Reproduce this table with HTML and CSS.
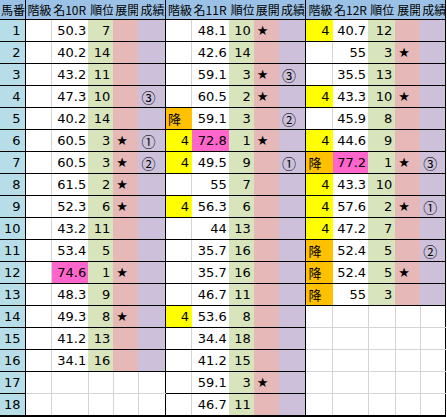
FILE: index.html
```html
<!DOCTYPE html>
<html lang="ja">
<head>
    <meta charset="UTF-8">
    <title>名R 一覧</title>
    <link rel="stylesheet" href="styles.css">
</head>
<body>
    <table class="sheet">
        <colgroup>
            <col class="c-no">
            <col class="c-k"><col class="c-m"><col class="c-r"><col class="c-t"><col class="c-s">
            <col class="c-k"><col class="c-m"><col class="c-r"><col class="c-t"><col class="c-s2">
            <col class="c-k"><col class="c-m3"><col class="c-r2"><col class="c-t"><col class="c-t">
        </colgroup>
        <tr class="head">
            <th class="h hn">馬番</th>
            <th class="h">階級</th><th class="h">名10R</th><th class="h">順位</th><th class="h">展開</th><th class="h he">成績</th>
            <th class="h">階級</th><th class="h">名11R</th><th class="h">順位</th><th class="h">展開</th><th class="h he">成績</th>
            <th class="h">階級</th><th class="h">名12R</th><th class="h">順位</th><th class="h">展開</th><th class="h he">成績</th>
        </tr>
        <tr>
            <th class="no">1</th>
            <td class="k"></td><td class="m">50.3</td><td class="r">7</td><td class="t"></td><td class="s"></td>
            <td class="k"></td><td class="m">48.1</td><td class="r">10</td><td class="t">★</td><td class="s"></td>
            <td class="k y">4</td><td class="m">40.7</td><td class="r">12</td><td class="t"></td><td class="s"></td>
        </tr>
        <tr>
            <th class="no">2</th>
            <td class="k"></td><td class="m">40.2</td><td class="r">14</td><td class="t"></td><td class="s"></td>
            <td class="k"></td><td class="m">42.6</td><td class="r">14</td><td class="t"></td><td class="s"></td>
            <td class="k"></td><td class="m">55</td><td class="r">3</td><td class="t">★</td><td class="s"></td>
        </tr>
        <tr>
            <th class="no">3</th>
            <td class="k"></td><td class="m">43.2</td><td class="r">11</td><td class="t"></td><td class="s"></td>
            <td class="k"></td><td class="m">59.1</td><td class="r">3</td><td class="t">★</td><td class="s">③</td>
            <td class="k"></td><td class="m">35.5</td><td class="r">13</td><td class="t"></td><td class="s"></td>
        </tr>
        <tr>
            <th class="no">4</th>
            <td class="k"></td><td class="m">47.3</td><td class="r">10</td><td class="t"></td><td class="s">③</td>
            <td class="k"></td><td class="m">60.5</td><td class="r">2</td><td class="t">★</td><td class="s"></td>
            <td class="k y">4</td><td class="m">43.3</td><td class="r">10</td><td class="t">★</td><td class="s"></td>
        </tr>
        <tr>
            <th class="no">5</th>
            <td class="k"></td><td class="m">40.2</td><td class="r">14</td><td class="t"></td><td class="s"></td>
            <td class="k o">降</td><td class="m">59.1</td><td class="r">3</td><td class="t"></td><td class="s">②</td>
            <td class="k"></td><td class="m">45.9</td><td class="r">8</td><td class="t"></td><td class="s"></td>
        </tr>
        <tr>
            <th class="no">6</th>
            <td class="k"></td><td class="m">60.5</td><td class="r">3</td><td class="t">★</td><td class="s">①</td>
            <td class="k y">4</td><td class="m p">72.8</td><td class="r">1</td><td class="t">★</td><td class="s"></td>
            <td class="k y">4</td><td class="m">44.6</td><td class="r">9</td><td class="t"></td><td class="s"></td>
        </tr>
        <tr>
            <th class="no">7</th>
            <td class="k"></td><td class="m">60.5</td><td class="r">3</td><td class="t">★</td><td class="s">②</td>
            <td class="k y">4</td><td class="m">49.5</td><td class="r">9</td><td class="t"></td><td class="s">①</td>
            <td class="k o">降</td><td class="m p">77.2</td><td class="r">1</td><td class="t">★</td><td class="s">③</td>
        </tr>
        <tr>
            <th class="no">8</th>
            <td class="k"></td><td class="m">61.5</td><td class="r">2</td><td class="t">★</td><td class="s"></td>
            <td class="k"></td><td class="m">55</td><td class="r">7</td><td class="t"></td><td class="s"></td>
            <td class="k y">4</td><td class="m">43.3</td><td class="r">10</td><td class="t"></td><td class="s"></td>
        </tr>
        <tr>
            <th class="no">9</th>
            <td class="k"></td><td class="m">52.3</td><td class="r">6</td><td class="t">★</td><td class="s"></td>
            <td class="k y">4</td><td class="m">56.3</td><td class="r">6</td><td class="t"></td><td class="s"></td>
            <td class="k y">4</td><td class="m">57.6</td><td class="r">2</td><td class="t">★</td><td class="s">①</td>
        </tr>
        <tr>
            <th class="no">10</th>
            <td class="k"></td><td class="m">43.2</td><td class="r">11</td><td class="t"></td><td class="s"></td>
            <td class="k"></td><td class="m">44</td><td class="r">13</td><td class="t"></td><td class="s"></td>
            <td class="k y">4</td><td class="m">47.2</td><td class="r">7</td><td class="t"></td><td class="s"></td>
        </tr>
        <tr>
            <th class="no">11</th>
            <td class="k"></td><td class="m">53.4</td><td class="r">5</td><td class="t"></td><td class="s"></td>
            <td class="k"></td><td class="m">35.7</td><td class="r">16</td><td class="t"></td><td class="s"></td>
            <td class="k o">降</td><td class="m">52.4</td><td class="r">5</td><td class="t"></td><td class="s">②</td>
        </tr>
        <tr>
            <th class="no">12</th>
            <td class="k"></td><td class="m p">74.6</td><td class="r">1</td><td class="t">★</td><td class="s"></td>
            <td class="k"></td><td class="m">35.7</td><td class="r">16</td><td class="t"></td><td class="s"></td>
            <td class="k o">降</td><td class="m">52.4</td><td class="r">5</td><td class="t">★</td><td class="s"></td>
        </tr>
        <tr>
            <th class="no">13</th>
            <td class="k"></td><td class="m">48.3</td><td class="r">9</td><td class="t"></td><td class="s"></td>
            <td class="k"></td><td class="m">46.7</td><td class="r">11</td><td class="t"></td><td class="s"></td>
            <td class="k o">降</td><td class="m">55</td><td class="r">3</td><td class="t"></td><td class="s"></td>
        </tr>
        <tr>
            <th class="no">14</th>
            <td class="k"></td><td class="m">49.3</td><td class="r">8</td><td class="t">★</td><td class="s"></td>
            <td class="k y">4</td><td class="m">53.6</td><td class="r">8</td><td class="t"></td><td class="s"></td>
            <td class="k n"></td><td class="m n"></td><td class="r n"></td><td class="t n"></td><td class="s n"></td>
        </tr>
        <tr>
            <th class="no">15</th>
            <td class="k"></td><td class="m">41.2</td><td class="r">13</td><td class="t"></td><td class="s"></td>
            <td class="k"></td><td class="m">34.4</td><td class="r">18</td><td class="t"></td><td class="s"></td>
            <td class="k n"></td><td class="m n"></td><td class="r n"></td><td class="t n"></td><td class="s n"></td>
        </tr>
        <tr>
            <th class="no">16</th>
            <td class="k"></td><td class="m">34.1</td><td class="r">16</td><td class="t"></td><td class="s"></td>
            <td class="k"></td><td class="m">41.2</td><td class="r">15</td><td class="t"></td><td class="s"></td>
            <td class="k n"></td><td class="m n"></td><td class="r n"></td><td class="t n"></td><td class="s n"></td>
        </tr>
        <tr>
            <th class="no">17</th>
            <td class="k n"></td><td class="m n"></td><td class="r n"></td><td class="t n"></td><td class="s n"></td>
            <td class="k"></td><td class="m">59.1</td><td class="r">3</td><td class="t">★</td><td class="s"></td>
            <td class="k n"></td><td class="m n"></td><td class="r n"></td><td class="t n"></td><td class="s n"></td>
        </tr>
        <tr class="last">
            <th class="no">18</th>
            <td class="k n"></td><td class="m n"></td><td class="r n"></td><td class="t n"></td><td class="s n"></td>
            <td class="k"></td><td class="m">46.7</td><td class="r">11</td><td class="t"></td><td class="s"></td>
            <td class="k n"></td><td class="m n"></td><td class="r n"></td><td class="t n"></td><td class="s n"></td>
        </tr>
    </table>
</body>
</html>
```

FILE: styles.css
```css
*{
    margin: 0;
    padding: 0;
}
body{
    background-color: #fff;
}
.sheet{
    border-collapse: collapse;
    table-layout: fixed;
    width: 446px;
    font-family: "DejaVu Sans", "Noto Sans CJK JP", sans-serif;
    font-size: 13px;
    color: #000;
}
.sheet .c-no{ width: 25px; }
.sheet .c-k{ width: 26px; }
.sheet .c-m{ width: 37px; }
.sheet .c-m3{ width: 36px; }
.sheet .c-r{ width: 25px; }
.sheet .c-r2{ width: 27px; }
.sheet .c-t{ width: 25px; }
.sheet .c-s{ width: 27px; }
.sheet .c-s2{ width: 27px; }

.sheet th,
.sheet td{
    height: 21px;
    padding: 0 2px;
    white-space: nowrap;
    overflow: hidden;
    text-align: right;
    font-weight: normal;
    border-top: 1px solid #000;
    border-bottom: 1px solid #000;
}

/* header */
.sheet .head th{
    height: 19px;
    padding: 0 0 0 2px;
    text-align: left;
    font-family: "Noto Sans CJK JP", sans-serif;
    font-size: 12px;
    background-color: #9bc2e6;
    border-top: none;
}
.sheet .head .hn{
    padding-left: 1px;
    border-right: 1px solid #000;
}
.sheet .head .he{
    border-right: 1px solid #000;
}

/* 馬番 */
.sheet .no{
    background-color: #b7dee8;
    border-right: 1px solid #000;
    padding-right: 4px;
}

.sheet .k{
    background-color: #fff;
    border-left: 1px solid #000;
    border-right: 1px solid #d4d4d4;
}
.sheet .k.y{
    background-color: #ffff00;
    border-right-color: #ffff00;
}
.sheet .k.o{
    background-color: #ffc000;
    border-right-color: #ffc000;
    text-align: left;
    font-family: "Noto Sans CJK JP", sans-serif;
    padding-left: 2px;
}
.sheet .m{
    background-color: #fff;
    padding-right: 2px;
}
.sheet .m.p{
    background-color: #ff66cc;
}
.sheet .r{
    background-color: #d8e4bc;
    padding-right: 3px;
}
.sheet .t{
    background-color: #e6b8b7;
    text-align: left;
    padding-left: 3px;
}
.sheet .s{
    background-color: #ccc0da;
    text-align: left;
    padding-left: 3px;
    font-family: "Noto Sans CJK JP", sans-serif;
    font-size: 14px;
    border-right: 1px solid #000;
}

/* empty cells keep the plain grid */
.sheet .n{
    background-color: #fff;
    border-left: 1px solid #d4d4d4;
    border-right: 1px solid #d4d4d4;
    border-top: 1px solid #d4d4d4;
    border-bottom: 1px solid #d4d4d4;
}
.sheet .n.k{
    border-left-color: #000;
}
.sheet .n.s{
    border-right-color: #000;
}

.sheet .last th,
.sheet .last td{
    border-bottom: 2px solid #000;
}
```
